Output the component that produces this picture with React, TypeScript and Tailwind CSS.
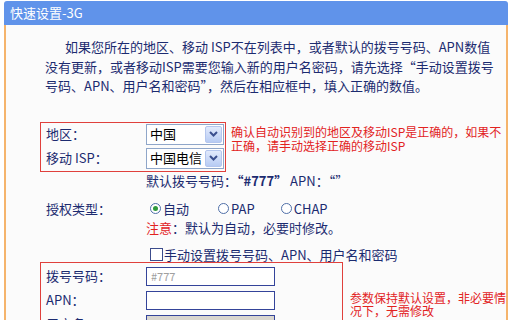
import React from 'react';

const navy = 'text-[#1c2b70]';

const Chevron: React.FC = () => (
  <div className="shrink-0 w-[17px] h-[17px] mr-[1px] rounded-[2px] border border-[#b4c6ee] bg-gradient-to-b from-[#e2eafc] to-[#b7cbf3] flex items-center justify-center">
    <svg width="9" height="6" viewBox="0 0 9 6">
      <path d="M1 1 L4.5 4.5 L8 1" fill="none" stroke="#3b4f8f" strokeWidth="2" />
    </svg>
  </div>
);

const Select: React.FC<{ value: string }> = ({ value }) => (
  <div className="w-[78px] h-[21px] bg-white border border-[#8fa6c9] flex items-center justify-between">
    <span className="pl-[3px] text-[13px] leading-[18px] text-black whitespace-nowrap">{value}</span>
    <Chevron />
  </div>
);

const Radio: React.FC<{ checked?: boolean; label: string }> = ({ checked, label }) => (
  <div className="flex items-center">
    <div className="w-[11px] h-[11px] rounded-full border border-[#4f6fa8] bg-white flex items-center justify-center">
      {checked && <div className="w-[5px] h-[5px] rounded-full bg-[#2f9a3c]" />}
    </div>
    <span className="ml-[2px]">{label}</span>
  </div>
);

const Field: React.FC<{ placeholder?: string; disabled?: boolean }> = ({ placeholder, disabled }) => (
  <div
    className={
      'w-[129px] h-[19px] border-[1.5px] border-[#34449a] flex items-center pl-[4px] text-[11px] text-[#a0a0a0] ' +
      (disabled ? 'bg-[#d9d6cf]' : 'bg-white')
    }
  >
    {placeholder}
  </div>
);

export default function App() {
  return (
    <div
      className="w-[510px] h-[320px] overflow-hidden bg-white pl-[4px] pr-[2px] pt-[1px]"
      style={{ fontFamily: '"Noto Sans CJK SC", "Liberation Sans", sans-serif' }}
    >
      <div className="h-[24px] rounded-t-[3px] bg-[#6093ea] text-white text-[13px] leading-[24px] pl-[6px]">
        快速设置-3G
      </div>
      <div className={'h-[300px] border-x-2 border-[#f5b46c] bg-[#fbfbfb] ' + navy + ' text-[13px]'}>
        {/* intro paragraph */}
        <div className="pt-[12px] pl-[39px] leading-[19.5px] whitespace-nowrap">
          <div className="pl-[20px]">如果您所在的地区、移动 ISP不在列表中，或者默认的拨号号码、APN数值</div>
          <div>没有更新，或者移动ISP需要您输入新的用户名密码，请先选择“手动设置拨号</div>
          <div>号码、APN、用户名和密码”，然后在相应框中，填入正确的数值。</div>
        </div>

        <div className="pl-[34px]">
          {/* region / isp */}
          <div className="mt-[26px] flex items-start">
            <div className="w-[186px] border border-[#e0403c] pl-[5px] pt-[1px] pb-[2px] flex flex-col gap-[3px]">
              <div className="flex items-center h-[21px]">
                <span className="w-[100px]">地区：</span>
                <Select value="中国" />
              </div>
              <div className="flex items-center h-[21px]">
                <span className="w-[100px]">移动 ISP：</span>
                <Select value="中国电信" />
              </div>
            </div>
            <div className="ml-[5px] mt-[3px] text-[12px] leading-[14px] text-[#e2231f] whitespace-nowrap">
              <div>确认自动识别到的地区及移动ISP是正确的，如果不</div>
              <div>正确，请手动选择正确的移动ISP</div>
            </div>
          </div>

          <div className="mt-[1px] pl-[106px] h-[16px] leading-[16px] whitespace-nowrap">
            默认拨号号码：<b>“#777”</b> APN：“”
          </div>

          {/* auth type */}
          <div className="mt-[12px] pl-[6px] h-[16px] flex items-center">
            <span className="w-[104px]">授权类型：</span>
            <div className="flex items-center gap-[29px]">
              <Radio checked label="自动" />
              <div className="flex items-center gap-[26px]">
                <Radio label="PAP" />
                <Radio label="CHAP" />
              </div>
            </div>
          </div>

          <div className="mt-[3px] pl-[106px] h-[16px] leading-[16px]">
            <span className="text-[#e2231f]">注意</span>：默认为自动，必要时修改。
          </div>

          <div className="mt-[11px] pl-[110px] h-[16px] flex items-center">
            <div className="w-[13px] h-[13px] border border-[#3c4c8c] bg-white" />
            <span className="ml-[1px]">手动设置拨号号码、APN、用户名和密码</span>
          </div>

          {/* manual fields */}
          <div className="-mt-[1px] flex items-start">
            <div className="w-[304px] h-[80px] border border-[#e0403c] pl-[5px] pt-[4px] flex flex-col gap-[5px]">
              <div className="flex items-center h-[19px]">
                <span className="w-[100px]">拨号号码：</span>
                <Field placeholder="#777" />
              </div>
              <div className="flex items-center h-[19px]">
                <span className="w-[100px]">APN：</span>
                <Field />
              </div>
              <div className="flex items-center h-[19px]">
                <span className="w-[100px]">用户名：</span>
                <Field disabled />
              </div>
            </div>
            <div className="ml-[7px] mt-[29px] text-[12px] leading-[13px] text-[#e2231f] whitespace-nowrap">
              <div>参数保持默认设置，非必要情</div>
              <div>况下，无需修改</div>
            </div>
          </div>
        </div>
      </div>
    </div>
  );
}
